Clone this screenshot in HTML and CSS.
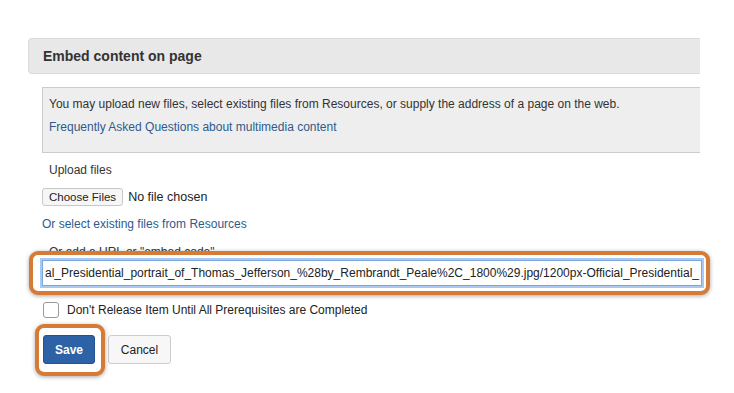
FILE: index.html
```html
<!DOCTYPE html>
<html>
<head>
  <meta charset="UTF-8" />
  <title>Embed content on page</title>
  <link rel="stylesheet" href="styles.css">
</head>
<body>
  <div class="page">
    <div class="page-header">
      <h2>Embed content on page</h2>
    </div>

    <div class="content">
      <div class="info-box">
        <p>You may upload new files, select existing files from Resources, or supply the address of a page on the web.</p>
        <a href="#">Frequently Asked Questions about multimedia content</a>
      </div>

      <div class="field upload">
        <label>Upload files</label>
        <div class="file-row">
          <button type="button" class="file-btn">Choose Files</button>
          <span>No file chosen</span>
        </div>
      </div>

      <a href="#" class="resources-link">Or select existing files from Resources</a>

      <div class="field url-field">
        <label>Or add a URL or "embed code"</label>
        <div class="url-wrap">
          <span class="highlight"></span>
          <div class="url-input">al_Presidential_portrait_of_Thomas_Jefferson_%28by_Rembrandt_Peale%2C_1800%29.jpg/1200px-Official_Presidential_</div>
        </div>
      </div>

      <label class="check-row">
        <span class="checkbox"></span>
        Don't Release Item Until All Prerequisites are Completed
      </label>

      <div class="actions">
        <div class="save-wrap">
          <span class="highlight"></span>
          <button type="button" class="btn-save">Save</button>
        </div>
        <button type="button" class="btn-cancel">Cancel</button>
      </div>
    </div>
  </div>
</body>
</html>
```

FILE: styles.css
```css
body {
  margin: 0;
  padding: 0;
  background: #fff;
  font-family: 'Liberation Sans', Arial, sans-serif;
  font-size: 12px;
  color: #333;
}
.page {
  width: 672px;
  margin-left: 28px;
  padding-top: 38px;
  padding-bottom: 28px;
}
.page-header {
  height: 34px;
  background: #e8e8e8;
  border: 1px solid #dcdcdc;
  border-right: none;
  border-radius: 4px 0 0 4px;
  display: flex;
  align-items: center;
  padding-left: 14px;
}
.page-header h2 {
  margin: 0;
  font-size: 14px;
  font-weight: bold;
  color: #333;
}
.content {
  padding-left: 14px;
}
.info-box {
  margin-top: 13px;
  height: 66px;
  box-sizing: border-box;
  background: #eee;
  border: 1px solid #ccc;
  border-right: none;
  padding: 9px 6px 0 6px;
  display: flex;
  flex-direction: column;
  gap: 9px;
}
.info-box p {
  margin: 0;
}
a {
  color: #2f5a8c;
  text-decoration: none;
}
.field label {
  display: block;
  padding-left: 7px;
  line-height: 14px;
}
.upload {
  margin-top: 10px;
}
.file-row {
  margin-top: 11px;
  display: flex;
  align-items: center;
  gap: 5px;
}
.file-btn {
  font-family: 'Liberation Sans', Arial, sans-serif;
  font-size: 11.5px;
  color: #222;
  background: #f6f6f6;
  border: 1px solid #c8c8c8;
  border-radius: 3px;
  height: 18px;
  padding: 0 6px;
}
.file-row span {
  font-size: 12.5px;
  color: #222;
}
.resources-link {
  display: block;
  margin-top: 11px;
}
.url-field {
  margin-top: 14px;
}
.url-wrap {
  position: relative;
  margin-top: 1px;
}
.url-input {
  position: relative;
  margin-right: -2px;
  height: 24px;
  line-height: 24px;
  border: 1px solid #7aa7e0;
  box-shadow: 0 0 0 2px #a9c9f1;
  padding-left: 2px;
  white-space: nowrap;
  overflow: hidden;
  color: #222;
  font-size: 12px;
  background: #fff;
}
.highlight {
  position: absolute;
  border: 4px solid #d67b35;
  border-radius: 9px;
  background: #fff;
  box-shadow: 0 1px 4px rgba(0, 0, 0, 0.35);
  pointer-events: none;
}
.url-wrap .highlight {
  left: -13px;
  right: -10px;
  top: -9px;
  bottom: -9px;
}
.check-row {
  display: flex;
  align-items: center;
  gap: 8px;
  margin-top: 16px;
  padding-left: 1px;
  font-size: 12px;
  color: #222;
}
.checkbox {
  width: 14px;
  height: 14px;
  border: 1px solid #999;
  border-radius: 3px;
  background: #fff;
}
.actions {
  display: flex;
  align-items: center;
  gap: 13px;
  margin-top: 17px;
  padding-left: 1px;
}
.save-wrap {
  position: relative;
  display: flex;
}
.save-wrap .highlight {
  left: -8px;
  right: -10px;
  top: -11px;
  bottom: -12px;
}
.btn-save {
  position: relative;
  font-family: 'Liberation Sans', Arial, sans-serif;
  font-size: 12px;
  font-weight: bold;
  color: #fff;
  background: #2e62a6;
  border: 1px solid #24528f;
  border-radius: 3px;
  width: 52px;
  height: 29px;
}
.btn-cancel {
  font-family: 'Liberation Sans', Arial, sans-serif;
  font-size: 12px;
  color: #222;
  background: #f7f7f7;
  border: 1px solid #ccc;
  border-radius: 3px;
  width: 63px;
  height: 29px;
}
```
